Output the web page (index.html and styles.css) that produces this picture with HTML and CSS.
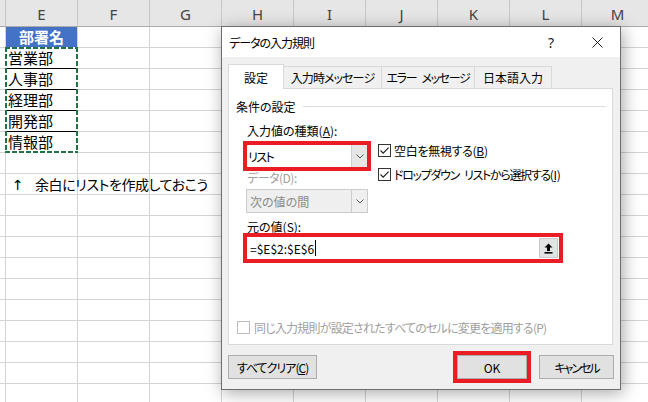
FILE: index.html
```html
<!DOCTYPE html>
<html lang="ja">
<head>
<meta charset="utf-8">
<title>データの入力規則</title>
<link rel="stylesheet" href="styles.css">
</head>
<body>
<div class="app">
  <div class="sheet">
    <div class="col-head">
      <div class="ch ch-stub"></div>
      <div class="ch">E</div>
      <div class="ch">F</div>
      <div class="ch">G</div>
      <div class="ch">H</div>
      <div class="ch">I</div>
      <div class="ch">J</div>
      <div class="ch">K</div>
      <div class="ch">L</div>
      <div class="ch">M</div>
    </div>
    <div class="sheet-body">
      <div class="cell hdr">部署名</div>
      <div class="cell data">営業部</div>
      <div class="cell data">人事部</div>
      <div class="cell data">経理部</div>
      <div class="cell data">開発部</div>
      <div class="cell data">情報部</div>
      <div class="cell"></div>
      <div class="cell note"><span class="arrow">↑</span>余白にリストを作成しておこう</div>
      <div class="marquee"></div>
    </div>
  </div>

  <div class="dialog">
    <div class="titlebar">
      <div class="title">データの入力規則</div>
      <div class="tb-btn help">?</div>
      <div class="tb-btn close">
        <svg width="11" height="11" viewBox="0 0 11 11"><path d="M0.5 0.5 L10.5 10.5 M10.5 0.5 L0.5 10.5" stroke="#1a1a1a" stroke-width="1" fill="none"/></svg>
      </div>
    </div>
    <div class="dlg-body">
      <div class="tabs">
        <div class="tab active t1">設定</div>
        <div class="tab t2">入力時メッセージ</div>
        <div class="tab t3">エラー<span class="sp"> </span>メッセージ</div>
        <div class="tab t4">日本語入力</div>
      </div>
      <div class="panel">
        <div class="group">
          <span class="group-label">条件の設定</span>
          <span class="rule"></span>
        </div>
        <div class="lbl">入力値の種類(<u>A</u>):</div>
        <div class="main">
          <div class="leftcol">
            <div class="redbox">
              <div class="combo">
                <span class="combo-text list-text">リスト</span>
                <span class="dd">
                  <svg width="8" height="5" viewBox="0 0 8 5"><path d="M0.5 0.5 L4 4 L7.5 0.5" fill="none" stroke="#5a5a5a" stroke-width="1"/></svg>
                </span>
              </div>
            </div>
            <div class="lbl2 disabled">データ(D):</div>
            <div class="combo combo-dis">
              <span class="combo-text">次の値の間</span>
              <span class="dd">
                <svg width="8" height="5" viewBox="0 0 8 5"><path d="M0.5 0.5 L4 4 L7.5 0.5" fill="none" stroke="#5a5a5a" stroke-width="1"/></svg>
              </span>
            </div>
          </div>
          <div class="rightcol">
            <div class="chk-row">
              <span class="cb">
                <svg width="11" height="11" viewBox="0 0 11 11"><path d="M1.5 5.5 L4.2 8.2 L9.6 2.6" fill="none" stroke="#222" stroke-width="1.2"/></svg>
              </span>
              <span class="blank-text">空白を無視する(<u>B</u>)</span>
            </div>
            <div class="chk-row">
              <span class="cb">
                <svg width="11" height="11" viewBox="0 0 11 11"><path d="M1.5 5.5 L4.2 8.2 L9.6 2.6" fill="none" stroke="#222" stroke-width="1.2"/></svg>
              </span>
              <span class="dropdown-text">ドロップダウン<span class="sp"> </span>リストから選択する(<u class="ukey">I</u>)</span>
            </div>
          </div>
        </div>
        <div class="lbl3">元の値(<u>S</u>):</div>
        <div class="redbox redbox2">
          <div class="source">
            <span class="source-text">=$E$2:$E$6</span><span class="caret"></span>
            <span class="upload">
              <svg width="9" height="11" viewBox="0 0 9 11"><path d="M4.5 0.5 L8.5 4.5 H6 V8 H3 V4.5 H0.5 Z" fill="#000"/><rect x="0.5" y="9" width="8" height="1.6" fill="#000"/></svg>
            </span>
          </div>
        </div>
        <div class="chk-row dis-row">
          <span class="cb cb-dis"></span>
          <span class="disabled apply-text">同じ入力規則が設定されたすべてのセルに変更を適用する(P)</span>
        </div>
      </div>
      <div class="btn-row">
        <div class="btn clear">すべてクリア(<u>C</u>)</div>
        <div class="ok-wrap"><div class="btn ok">OK</div></div>
        <div class="btn cancel">キャンセル</div>
      </div>
    </div>
  </div>
</div>
</body>
</html>
```

FILE: styles.css
```css
* { box-sizing: border-box; }
html, body { margin: 0; padding: 0; }
body {
  width: 648px;
  height: 402px;
  overflow: hidden;
  background: #fff;
  font-family: "Noto Sans CJK JP", "Noto Sans", sans-serif;
}
.app {
  position: relative;
  width: 648px;
  height: 402px;
  overflow: hidden;
}

/* ---------- spreadsheet ---------- */
.sheet {
  width: 648px;
  height: 402px;
  display: flex;
  flex-direction: column;
}
.col-head {
  flex: none;
  display: flex;
  height: 27px;
  background: #e6e6e6;
  border-bottom: 1px solid #ababab;
}
.ch {
  flex: none;
  width: 72px;
  border-left: 1px solid #c8c8c8;
  display: flex;
  align-items: center;
  justify-content: center;
  font-family: "Noto Sans", sans-serif;
  font-size: 15px;
  color: #444;
  padding-top: 1px;
}
.ch-stub { width: 5px; border-left: none; }

.sheet-body {
  position: relative;
  flex: 1;
  display: grid;
  grid-template-columns: 5px repeat(9, 72px);
  grid-auto-rows: 21px;
  align-content: start;
  background-color: #fff;
  background-image:
    linear-gradient(to right, #d4d4d4 1px, transparent 1px),
    linear-gradient(to bottom, transparent 20px, #d4d4d4 20px);
  background-size: 72px 100%, 100% 21px;
  background-position: 5px 0, 0 0;
}
.cell {
  grid-column: 2;
  margin-left: 1px;
  font-family: "Noto Sans CJK JP", sans-serif;
  font-size: 15px;
  line-height: 20px;
  white-space: nowrap;
  color: #000;
}
.cell.hdr {
  height: 20px;
  background: #4472c4;
  color: #fff;
  font-weight: bold;
  text-align: center;
}
.cell.data {
  background: #fff;
  border-bottom: 1px solid #000;
  padding-left: 2px;
}
.cell.note {
  grid-column: 2 / span 4;
  padding-left: 6px;
  font-size: 14px;
  letter-spacing: -0.4px;
  font-feature-settings: "palt";
}
.arrow {
  display: inline-block;
  width: 23px;
  font-family: "DejaVu Sans", sans-serif;
  font-size: 14px;
}
.marquee {
  position: absolute;
  left: 5px;
  top: 20px;
  width: 73px;
  height: 106px;
  background:
    repeating-linear-gradient(90deg, #217346 0 5px, #fff 5px 7px) left top / 100% 2px no-repeat,
    repeating-linear-gradient(90deg, #217346 0 5px, #fff 5px 7px) left bottom / 100% 2px no-repeat,
    repeating-linear-gradient(180deg, #217346 0 5px, #fff 5px 7px) left top / 2px 100% no-repeat,
    repeating-linear-gradient(180deg, #217346 0 5px, #fff 5px 7px) right top / 2px 100% no-repeat;
}

/* ---------- dialog ---------- */
.dialog {
  position: absolute;
  left: 221px;
  top: 26px;
  width: 400px;
  height: 364px;
  border: 1px solid #6e6e6e;
  background: #f0f0f0;
  box-shadow: 2px 3px 16px rgba(0, 0, 0, 0.35);
  display: flex;
  flex-direction: column;
  font-family: "Noto Sans CJK JP", sans-serif;
  font-size: 12px;
  font-feature-settings: "palt";
  color: #000;
}
u { text-underline-offset: 1px; }
.sp {
  display: inline-block;
  width: 5px;
}
.ukey { margin: 0 1px; }
.titlebar {
  flex: none;
  height: 30px;
  background: #fff;
  display: flex;
  align-items: center;
}
.title { flex: 1; padding-left: 7px; letter-spacing: -1px; }
.tb-btn {
  width: 46px;
  height: 30px;
  display: flex;
  align-items: center;
  justify-content: center;
}
.help {
  font-family: "Noto Sans", sans-serif;
  font-size: 14px;
  color: #222;
}

.dlg-body {
  flex: 1;
  display: flex;
  flex-direction: column;
  padding: 7px 7px 0 6px;
}
.tabs {
  flex: none;
  display: flex;
  align-items: flex-end;
  height: 24px;
}
.tab {
  height: 22px;
  margin-left: -1px;
  border: 1px solid #d9d9d9;
  border-bottom: none;
  background: #f0f0f0;
  display: flex;
  align-items: center;
  justify-content: center;
  white-space: nowrap;
}
.tab.active {
  height: 25px;
  margin-left: 0;
  margin-bottom: -1px;
  background: #fff;
  position: relative;
  z-index: 1;
}
.t1 { width: 56px; }
.t2 { width: 99px; letter-spacing: -0.9px; }
.t3 { width: 94px; letter-spacing: -1.3px; }
.t4 { width: 78px; }

.panel {
  flex: none;
  height: 257px;
  border: 1px solid #d9d9d9;
  background: #fff;
  display: flex;
  flex-direction: column;
}
.group {
  display: flex;
  align-items: center;
  height: 16px;
  margin: 9px 6px 0 7px;
}
.rule {
  flex: 1;
  height: 1px;
  margin-left: 7px;
  background: #dcdcdc;
}
.lbl {
  margin: 9px 0 0 18px;
  line-height: 16px;
}
.main {
  display: flex;
  margin-left: 14px;
}
.leftcol {
  width: 128px;
  display: flex;
  flex-direction: column;
}
.redbox {
  border: 4px solid #ec1c24;
  margin-top: 2px;
}
.combo {
  height: 22px;
  background: #fff;
  display: flex;
  align-items: center;
}
.combo-text { padding-left: 3px; flex: 1; }
.list-text { padding-left: 1px; letter-spacing: -1.5px; }
.dd {
  width: 16px;
  height: 100%;
  background: #e6e6e6;
  border-left: 1px solid #d0d0d0;
  display: flex;
  align-items: center;
  justify-content: center;
}
.lbl2 {
  margin-left: 4px;
  line-height: 14px;
  letter-spacing: -0.5px;
}
.disabled { color: #a0a0a0; }
.combo-dis {
  margin: 4px 0 0 3px;
  width: 122px;
  height: 24px;
  border: 1px solid #cccccc;
  background: #efefef;
  color: #8a8a8a;
}
.combo-dis .dd {
  background: #efefef;
  border-left: 1px solid #cccccc;
}
.rightcol {
  margin-left: 7px;
  padding-top: 3px;
  display: flex;
  flex-direction: column;
  gap: 8px;
}
.chk-row {
  display: flex;
  align-items: center;
  height: 16px;
  white-space: nowrap;
}
.blank-text { letter-spacing: -0.3px; }
.dropdown-text { letter-spacing: -1.3px; }
.apply-text { letter-spacing: -0.8px; }
.cb {
  flex: none;
  width: 13px;
  height: 13px;
  border: 1px solid #333;
  background: #fff;
  margin-right: 3px;
  display: flex;
}
.lbl3 {
  margin: 7px 0 0 18px;
  line-height: 13px;
}
.redbox2 {
  margin-left: 14px;
  margin-top: 0;
  width: 320px;
}
.source {
  height: 22px;
  background: #fff;
  display: flex;
  align-items: center;
  padding-left: 3px;
}
.caret {
  width: 1px;
  height: 16px;
  background: #000;
  margin-left: 1px;
}
.upload {
  margin-left: auto;
  margin-right: 1px;
  width: 19px;
  height: 20px;
  background: #e3e3e3;
  border: 1px solid #c9c9c9;
  display: flex;
  align-items: center;
  justify-content: center;
}
.dis-row {
  margin: 56px 0 0 8px;
}
.cb-dis {
  border-color: #bcbcbc;
  margin-right: 4px;
}

.btn-row {
  flex: none;
  display: flex;
  align-items: center;
  height: 32px;
  margin-top: 6px;
}
.btn {
  height: 24px;
  background: #e1e1e1;
  border: 1px solid #adadad;
  display: flex;
  align-items: center;
  justify-content: center;
  white-space: nowrap;
}
.btn.clear { width: 89px; letter-spacing: -1px; }
.ok-wrap {
  margin-left: auto;
  width: 78px;
  height: 32px;
  border: 4px solid #ec1c24;
}
.btn.ok { width: 70px; }
.btn.cancel {
  width: 75px;
  margin-left: 8px;
  margin-right: -1px;
  letter-spacing: -2px;
}
```
